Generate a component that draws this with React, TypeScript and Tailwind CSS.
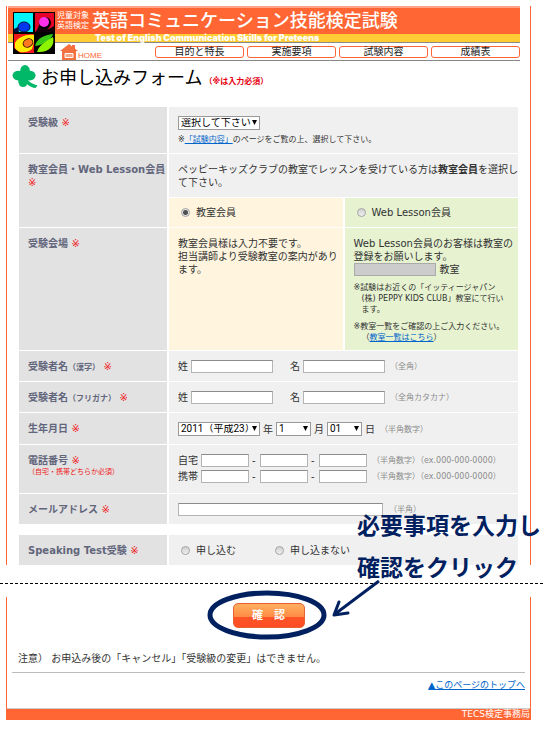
import React from 'react';

const Required = () => <span className="font-normal text-[#f01820]">※</span>;

type CellProps = { children: React.ReactNode; className?: string };

const Label = ({ children, className = '' }: CellProps) => (
  <div className={`whitespace-nowrap bg-[#e2e2e2] pb-[7px] pl-[9px] pt-[9px] font-bold text-[#62667c] ${className}`}>
    {children}
  </div>
);

const Value = ({ children, className = '' }: CellProps) => (
  <div className={`col-span-2 bg-[#f0f0f0] pb-2 pl-[9px] pt-[9px] ${className}`}>{children}</div>
);

const Field = ({ label, className = 'w-[82px]' }: { label: string; className?: string }) => (
  <input
    type="text"
    aria-label={label}
    className={`h-[13px] border border-[#b4b4b4] border-t-[#8c8c8c] bg-white px-px text-[10px] leading-none ${className}`}
  />
);

const Picker = ({ label, options, className }: { label: string; options: string[]; className: string }) => (
  <span className={`relative inline-flex ${className}`}>
    <select
      aria-label={label}
      className="h-[14px] w-full appearance-none border border-[#999] bg-white pl-[2px] text-[10px] leading-none text-black font-['Roboto','Noto_Sans_CJK_JP',sans-serif]"
    >
      {options.map((o) => (
        <option key={o}>{o}</option>
      ))}
    </select>
    <svg viewBox="0 0 6 6" className="pointer-events-none absolute right-[3px] top-1 size-[5px]">
      <path d="M0 0h6L3 6z" fill="#000" />
    </svg>
  </span>
);

const Radio = ({ name, children, checked }: { name: string; children: React.ReactNode; checked?: boolean }) => (
  <label className="ml-[3px] inline-flex items-center gap-[6px]">
    <input
      type="radio"
      name={name}
      defaultChecked={checked}
      className="size-[9px] appearance-none rounded-full border border-[#a4a4a4] bg-[linear-gradient(#d0d0d0,#f0f0f0)] checked:bg-[radial-gradient(circle,#505050_2px,#e4e4e4_3px)]"
    />
    {children}
  </label>
);

const Hint = ({ children }: { children: React.ReactNode }) => (
  <span className="ml-[2px] text-[8px] leading-[9px] text-[#8c8c8c]">{children}</span>
);

const PhoneRow = ({ label }: { label: string }) => (
  <div className="flex items-center gap-[3px]">
    <span>{label}</span>
    <Field label={`${label} 1`} className="w-12" />
    <span className="w-[5px]">-</span>
    <Field label={`${label} 2`} className="w-12" />
    <span className="w-[5px]">-</span>
    <Field label={`${label} 3`} className="w-12" />
    <Hint>（半角数字）（ex.000-000-0000）</Hint>
  </div>
);

const Logo = () => (
  <svg viewBox="0 0 42 42" className="absolute left-[6px] top-[6px] size-[42px]">
    <defs>
      <clipPath id="quarter">
        <rect x="1" y="22" width="20" height="19" />
      </clipPath>
    </defs>
    <rect width="42" height="42" fill="#000" />
    <rect x="1" y="1" width="19" height="19" fill="#00f4fa" />
    <ellipse cx="11" cy="15" rx="6" ry="5" fill="#0038f0" stroke="#001030" />
    <path d="M1 20V17l4-2 1 5z" fill="#001040" />
    <rect x="22" y="1" width="19" height="19" fill="#e40028" />
    <path d="M22 20c2-1 3-4 4-7l10 4 5-3v6z" fill="#14000a" />
    <circle cx="32" cy="11" r="6" fill="#000" />
    <circle cx="31" cy="10" r="5" fill="#ff30e8" />
    <g clipPath="url(#quarter)">
      <rect y="22" width="21" height="20" fill="#f01818" />
      <path d="M2 31c3-6 11-9 19-8v7l-2 7c-6 5-15 4-17-1z" fill="#ffec00" />
      <path d="M1 36l6 5H1z" fill="#000" />
      <ellipse cx="15" cy="31" rx="5" ry="4" fill="#ff7820" stroke="#401000" transform="rotate(-25 15 31)" />
    </g>
    <path d="M22 34c2-8 9-11 18-12-1 5-9 11-18 12z" fill="#38c818" />
    <path d="M24 40c2-7 9-11 16-15 2 8-3 16-16 15z" fill="#8cf400" />
  </svg>
);

const NAV = ['目的と特長', '実施要項', '試験内容', '成績表'];

const Header = () => (
  <header className="relative mr-[10px] pl-px">
    <div className="border-t-2 border-[#ffa488] bg-[#ff6633] pl-[49px] text-white">
      <div className="flex h-[26px] items-center gap-[3px] whitespace-nowrap">
        <p className="text-[8px] leading-[10px]">
          児童対象
          <br />
          英語検定
        </p>
        <h1 className="text-[18px] font-medium leading-[26px]">英語コミュニケーション技能検定試験</h1>
      </div>
    </div>
    <p className="border-b border-[#888] bg-[#ffcc33] pl-[87px] text-[9px] font-black leading-[8px] text-white font-['Inter',sans-serif]">
      Test of English Communication Skills for Preteens
    </p>
    <nav className="flex h-[18px] items-center border-b border-[#888] pl-[52px]">
      <a href="#home" className="flex items-end text-[8px] leading-[9px] text-[#ff6633] font-['Liberation_Sans',sans-serif]">
        <svg viewBox="0 0 18 16" className="h-4 w-[18px]">
          <path d="M9 0 0 7h18z" fill="#f47040" />
          <path d="M12 1h3v6h-3z" fill="#f47040" />
          <path d="M2 7h14v9H2z" fill="#f47040" />
          <path d="M5 9.500h8v4H5z" fill="#f8a888" stroke="#fff" />
        </svg>
        HOME
      </a>
      <ul className="ml-auto flex w-[365px] gap-[3px]">
        {NAV.map((item) => (
          <li key={item} className="flex-1">
            <a
              href="#nav"
              className="block rounded-[3px] border border-[#ff6633] bg-white text-center text-[10px] leading-[10px] text-[#222]"
            >
              {item}
            </a>
          </li>
        ))}
      </ul>
    </nav>
    <Logo />
  </header>
);

const Clover = () => (
  <svg viewBox="0 0 27 26" className="h-[25px] w-[27px]" fill="#00b868">
    <ellipse cx="13" cy="6" rx="5" ry="6" />
    <ellipse cx="6" cy="11" rx="6" ry="5" />
    <ellipse cx="18" cy="11" rx="6" ry="5" />
    <ellipse cx="11" cy="17" rx="5" ry="6" />
    <circle cx="12" cy="12" r="5" />
    <path d="M14 12c2 5 6 8 12 9l-2 3c-6-1-10-4-12-9z" />
  </svg>
);

const EntryForm = () => (
  <div className="px-3 pt-4">
    <div className="grid grid-cols-[148px_1fr_1fr] gap-x-[2px] gap-y-px">
      <Label>
        受験級 <Required />
      </Label>
      <Value>
        <Picker label="受験級" options={['選択して下さい']} className="w-[82px]" />
        <p className="mt-1 text-[8px] leading-[11px]">
          ※
          <a href="#contents" className="text-[#0066cc] underline">
            「試験内容」
          </a>
          のページをご覧の上、選択して下さい。
        </p>
      </Value>

      <Label className="row-span-2">
        教室会員・Web Lesson会員
        <br />
        <Required />
      </Label>
      <Value className="whitespace-nowrap">
        ペッピーキッズクラブの教室でレッスンを受けている方は<b>教室会員</b>を選択し
        <br />
        て下さい。
      </Value>
      <div className="flex items-center bg-[#fff5de] pl-[9px]">
        <Radio name="member" checked>
          教室会員
        </Radio>
      </div>
      <div className="flex h-[29px] items-center bg-[#e6f2d0] pl-[9px]">
        <Radio name="member">Web Lesson会員</Radio>
      </div>

      <Label>
        受験会場 <Required />
      </Label>
      <div className="whitespace-nowrap bg-[#fff5de] pl-[9px] pt-[9px]">
        教室会員様は入力不要です。
        <br />
        担当講師より受験教室の案内があり
        <br />
        ます。
      </div>
      <div className="whitespace-nowrap bg-[#e6f2d0] pb-[7px] pl-[9px] pt-[9px]">
        <p>
          Web Lesson会員のお客様は教室の
          <br />
          登録をお願いします。
        </p>
        <label className="flex items-center gap-1">
          <input type="text" className="h-[13px] w-[82px] border border-[#aaa] bg-[#ccc]" />
          教室
        </label>
        <p className="mt-[6px] pl-2 -indent-2 text-[8px] leading-[11px]">
          ※試験はお近くの「イッティージャパン
          <span className="block indent-0">(株) PEPPY KIDS CLUB」教室にて行い</span>
          <span className="block indent-0">ます。</span>
        </p>
        <p className="mt-[6px] pl-2 -indent-2 text-[8px] leading-[11px]">
          ※教室一覧をご確認の上ご入力ください。
          <span className="block indent-0">
            （
            <a href="#rooms" className="text-[#0066cc] underline">
              教室一覧はこちら
            </a>
            ）
          </span>
        </p>
      </div>

      <Label>
        受験者名<span className="text-[8px]">（漢字）</span> <Required />
      </Label>
      <Value className="flex items-center gap-[3px]">
        姓
        <Field label="姓（漢字）" />
        <span className="ml-[14px]">名</span>
        <Field label="名（漢字）" />
        <Hint>（全角）</Hint>
      </Value>

      <Label>
        受験者名<span className="text-[8px]">（フリガナ）</span> <Required />
      </Label>
      <Value className="flex items-center gap-[3px]">
        姓
        <Field label="姓（フリガナ）" />
        <span className="ml-[14px]">名</span>
        <Field label="名（フリガナ）" />
        <Hint>（全角カタカナ）</Hint>
      </Value>

      <Label>
        生年月日 <Required />
      </Label>
      <Value className="flex items-center gap-[3px]">
        <Picker label="年" options={['2011（平成23）']} className="w-[82px]" />
        年
        <Picker label="月" options={['1']} className="w-[35px]" />
        月
        <Picker label="日" options={['01']} className="w-[35px]" />
        日
        <Hint>（半角数字）</Hint>
      </Value>

      <Label>
        電話番号 <Required />
        <p className="text-[7px] font-normal leading-[11px] text-[#f01820]">（自宅・携帯どちらか必須）</p>
      </Label>
      <Value>
        <div className="space-y-[3px] pb-[2px]">
          <PhoneRow label="自宅" />
          <PhoneRow label="携帯" />
        </div>
      </Value>

      <Label>
        メールアドレス <Required />
      </Label>
      <Value className="flex items-center gap-1">
        <Field label="メールアドレス" className="w-[205px]" />
        <Hint>（半角）</Hint>
      </Value>

      <Label className="mt-[10px]">
        Speaking Test受験 <Required />
      </Label>
      <Value className="mt-[10px] flex items-center gap-9">
        <Radio name="speaking">申し込む</Radio>
        <Radio name="speaking">申し込まない</Radio>
      </Value>
    </div>
  </div>
);

export default function App() {
  return (
    <div className="w-full overflow-hidden bg-white pt-[6px] text-[10px] leading-[13px] text-[#333] font-['DejaVu_Sans','Noto_Sans_CJK_JP',sans-serif]">
      <div className="ml-[6px] mr-3 border-x border-[#ff6633]">
        <Header />
        <div className="flex items-center gap-[2px] pl-[5px] pt-[3px]">
          <Clover />
          <h2 className="text-[18px] leading-[27px] text-black">お申し込みフォーム</h2>
          <span className="mt-2 text-[8px] font-bold text-[#e60012]">（※は入力必須）</span>
        </div>
        <EntryForm />
      </div>

      {/* Cut between the two parts of the page, with the note written across it */}
      <div className="relative h-8">
        <div className="absolute inset-x-0 top-[18px] border-t border-dashed border-black" />
        <p className="absolute -top-[60px] left-[357px] whitespace-nowrap text-[23px] font-bold leading-[42px] text-[#002060]">
          必要事項を入力し
          <br />
          確認をクリック
        </p>
        <svg viewBox="0 0 52 40" className="absolute left-[330px] top-[14px] z-10 h-10 w-[52px]" fill="none" stroke="#002060">
          <path d="M49 2 5 35" strokeWidth="3" />
          <path d="M9 23 4 36l14-2" strokeWidth="3" strokeLinecap="round" strokeLinejoin="round" />
        </svg>
      </div>

      <div className="ml-[6px] mr-3 border-x border-[#ff6633] pt-[6px]">
        <div className="relative mx-auto w-[72px]">
          <button
            type="button"
            className="h-[25px] w-full rounded-[5px] border border-[#e86030] bg-[linear-gradient(#ffb060,#ff8c44_55%,#ff5528_56%,#ff4c24)] text-[11px] font-bold leading-none text-white"
          >
            確　認
          </button>
          <svg viewBox="0 0 120 52" className="pointer-events-none absolute -left-[26px] -top-[14px] h-[52px] w-[120px] max-w-none">
            <ellipse cx="60" cy="26" rx="57" ry="22" fill="none" stroke="#002060" strokeWidth="5" />
          </svg>
        </div>
        <p className="mt-6 pl-[11px]">注意） お申込み後の「キャンセル」「受験級の変更」はできません。</p>
        <div className="mx-[5px] mt-[7px] border-t border-[#bbb] pt-[5px] text-right">
          <a href="#top" className="text-[9px] text-[#0066cc] underline">
            ▲このページのトップへ
          </a>
        </div>
        <footer className="mt-4 border-t border-[#ccc] bg-[#ff6633] text-right text-[9px] leading-[11px] text-white">
          TECS検定事務局
        </footer>
      </div>
    </div>
  );
}
